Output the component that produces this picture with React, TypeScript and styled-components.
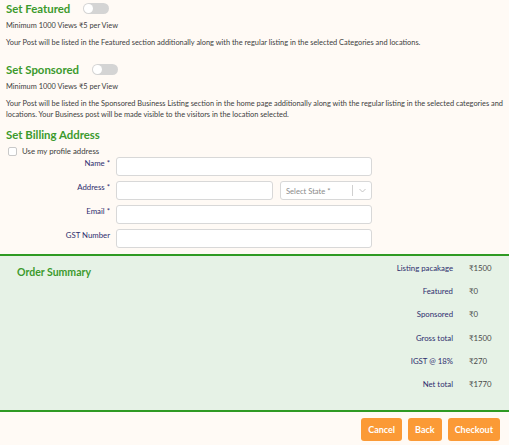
import React from "react";
import styled, { createGlobalStyle } from "styled-components";

const GlobalStyle = createGlobalStyle`
  html, body {
    margin: 0;
    padding: 0;
    background: #fffaf5;
    font-family: Lato, "Open Sans", sans-serif;
  }
  * { box-sizing: border-box; }
`;

const Page = styled.div`
  width: 509px;
  min-height: 445px;
  background: #fffaf5;
`;

const Top = styled.div`
  padding: 0 6px;
`;

const Section = styled.section<{ $after: number }>`
  margin-bottom: ${({ $after }) => $after}px;
`;

const TitleRow = styled.div`
  display: flex;
  align-items: center;
  gap: 13px;
  height: 17px;
`;

const Title = styled.h2`
  margin: 0;
  font-size: 11.4px;
  font-weight: 700;
  color: #3c9a2d;
  line-height: 17px;
`;

const Toggle = styled.span`
  position: relative;
  display: inline-block;
  width: 26px;
  height: 11px;
  border-radius: 6px;
  background: #d4d4d4;

  &::after {
    content: "";
    position: absolute;
    left: 1px;
    top: 1px;
    width: 9px;
    height: 9px;
    border-radius: 50%;
    background: #fff;
  }
`;

const Small = styled.p<{ $gap?: number }>`
  margin: 0;
  margin-top: ${({ $gap }) => $gap ?? 0}px;
  font-size: 7.4px;
  line-height: 11px;
  color: #3d3d3d;
`;

const CheckRow = styled.label`
  display: flex;
  align-items: center;
  gap: 5px;
  margin: 3px 0 0 2px;
  font-size: 7.8px;
  color: #3d3d3d;
  height: 10px;
`;

const Box = styled.span`
  width: 9px;
  height: 9px;
  border: 1px solid #c9c9c9;
  border-radius: 2px;
  background: #fff;
`;

const Form = styled.div`
  display: grid;
  grid-template-columns: 104px 256px;
  column-gap: 6px;
  row-gap: 5px;
  margin-top: 1px;
`;

const Label = styled.div`
  text-align: right;
  font-size: 7.8px;
  color: #2e2e6e;
  padding-top: 1px;
`;

const Input = styled.div`
  height: 19px;
  border: 1px solid #d8d8d8;
  border-radius: 3px;
  background: #fff;
`;

const Split = styled.div`
  display: flex;
  gap: 7px;
`;

const SelectBox = styled.div`
  flex: 0 0 92px;
  height: 19px;
  border: 1px solid #d8d8d8;
  border-radius: 3px;
  background: #fff;
  display: flex;
  align-items: center;
  padding-left: 5px;
  font-size: 7.6px;
  color: #8a8a8a;
`;

const SelectText = styled.span`
  flex: 1;
`;

const Divider = styled.span`
  width: 1px;
  height: 11px;
  background: #d0d0d0;
`;

const Chevron = styled.span`
  width: 18px;
  display: flex;
  justify-content: center;
  color: #bdbdbd;
`;

const Summary = styled.div`
  margin-top: 6px;
  height: 158px;
  border-top: 2px solid #2f9a23;
  border-bottom: 2px solid #2f9a23;
  background: #e6f2e6;
  display: flex;
  justify-content: space-between;
  padding: 7px 0 0 17px;
`;

const SummaryTitle = styled.h3`
  margin: 2px 0 0;
  font-size: 10.5px;
  line-height: 14px;
  font-weight: 700;
  color: #3c9a2d;
`;

const Rows = styled.div`
  display: grid;
  grid-template-columns: auto 40px;
  column-gap: 16px;
  row-gap: 12.2px;
  align-content: start;
`;

const RowLabel = styled.div`
  text-align: right;
  font-size: 7.8px;
  line-height: 11px;
  color: #2e2e6e;
`;

const RowValue = styled.div`
  font-size: 7.8px;
  line-height: 11px;
  color: #4a4a4a;
`;

const Footer = styled.div`
  display: flex;
  justify-content: flex-end;
  gap: 6px;
  padding: 6px 9px 0 0;
`;

const Button = styled.button`
  height: 23px;
  padding: 0 7px;
  border: none;
  border-radius: 3px;
  background: #fb9a36;
  color: #fff;
  font-family: inherit;
  font-size: 9px;
  font-weight: 700;
`;

const summary = [
  ["Listing pacakage", "₹1500"],
  ["Featured", "₹0"],
  ["Sponsored", "₹0"],
  ["Gross total", "₹1500"],
  ["IGST @ 18%", "₹270"],
  ["Net total", "₹1770"],
];

export default function App() {
  return (
    <Page>
      <GlobalStyle />
      <Top>
        <Section $after={13}>
          <TitleRow>
            <Title>Set Featured</Title>
            <Toggle />
          </TitleRow>
          <Small $gap={3}>Minimum 1000 Views ₹5 per View</Small>
          <Small $gap={6}>
            Your Post will be listed in the Featured section additionally along with the regular listing in the selected Categories and locations.
          </Small>
        </Section>
        <Section $after={6}>
          <TitleRow>
            <Title>Set Sponsored</Title>
            <Toggle />
          </TitleRow>
          <Small $gap={3}>Minimum 1000 Views ₹5 per View</Small>
          <Small $gap={6}>
            Your Post will be listed in the Sponsored Business Listing section in the home page additionally along with the regular listing in the selected categories and locations. Your Business post will be made visible to the visitors in the location selected.
          </Small>
        </Section>
        <div>
          <Title>Set Billing Address</Title>
          <CheckRow>
            <Box />
            Use my profile address
          </CheckRow>
          <Form>
            <Label>Name *</Label>
            <Input />
            <Label>Address *</Label>
            <Split>
              <Input style={{ flex: 1 }} />
              <SelectBox>
                <SelectText>Select State *</SelectText>
                <Divider />
                <Chevron>
                  <svg width="7" height="5" viewBox="0 0 7 5">
                    <path d="M0.5 1 L3.5 4 L6.5 1" fill="none" stroke="currentColor" strokeWidth="0.9" />
                  </svg>
                </Chevron>
              </SelectBox>
            </Split>
            <Label>Email *</Label>
            <Input />
            <Label>GST Number</Label>
            <Input />
          </Form>
        </div>
      </Top>
      <Summary>
        <SummaryTitle>Order Summary</SummaryTitle>
        <Rows>
          {summary.map(([k, v]) => (
            <React.Fragment key={k}>
              <RowLabel>{k}</RowLabel>
              <RowValue>{v}</RowValue>
            </React.Fragment>
          ))}
        </Rows>
      </Summary>
      <Footer>
        <Button>Cancel</Button>
        <Button>Back</Button>
        <Button>Checkout</Button>
      </Footer>
    </Page>
  );
}
